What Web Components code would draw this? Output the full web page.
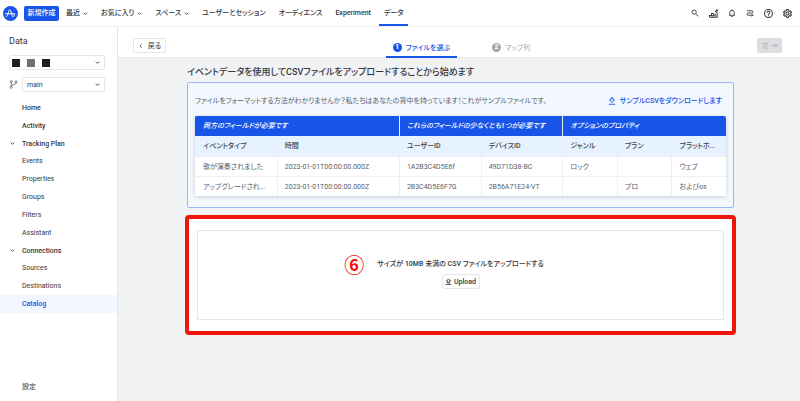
<!DOCTYPE html>
<html lang="ja">
<head>
<meta charset="utf-8">
<title>Data - Catalog</title>
<style>
html, body { margin: 0; }
body {
  --blue: #1754e8; --ink: #35373d; --muted: #5b5e66; --line: #e6e7ea;
  font-family: Roboto, "Noto Sans CJK JP", sans-serif;
  font-size: 7px; line-height: 10px; color: var(--ink); background: #f0f2f4;
  font-feature-settings: "palt";
}
</style>
</head>
<body>
<app-shell>
  <top-bar slot="top">
    <nav-link>最近</nav-link>
    <nav-link>お気に入り</nav-link>
    <nav-link>スペース</nav-link>
    <nav-link plain>ユーザーとセッション</nav-link>
    <nav-link plain>オーディエンス</nav-link>
    <nav-link plain>Experiment</nav-link>
    <nav-link plain current>データ</nav-link>
  </top-bar>
  <side-bar slot="side">
    <side-link kind="head">Home</side-link>
    <side-link kind="head">Activity</side-link>
    <side-link kind="group">Tracking Plan</side-link>
    <side-link>Events</side-link>
    <side-link>Properties</side-link>
    <side-link>Groups</side-link>
    <side-link>Filters</side-link>
    <side-link>Assistant</side-link>
    <side-link kind="group">Connections</side-link>
    <side-link>Sources</side-link>
    <side-link>Destinations</side-link>
    <side-link current>Catalog</side-link>
  </side-bar>
  <step-bar>
    <step-tab num="1" current>ファイルを選ぶ</step-tab>
    <step-tab num="2">マップ列</step-tab>
  </step-bar>
  <page-content>
    <span slot="title">イベントデータを使用してCSVファイルをアップロードすることから始めます</span>
    <sample-panel></sample-panel>
    <upload-box></upload-box>
  </page-content>
</app-shell>

<script>
const ICONS = {
  down: '<path d="M4 6l4 4 4-4"/>',
  left: '<path d="M10 3L5 8l5 5"/>',
  right: '<path d="M2 8h12M9 3l5 5-5 5"/>',
  search: '<circle cx="6.3" cy="6.3" r="4.3"/><path d="M9.7 9.7l5 5"/>',
  chart: '<path d="M1 14.500h13.500V6.500M1 14.500v-3h3.500V8H8M4 12h7V8.500M8 8v2.500M14.500 6.500L11 4M12 1l2.500 2.500L15.500 1"/>',
  bell: '<path d="M2 12.500h12M3.500 12.500V7a4.500 4.500 0 0 1 9 0v5.500M8 2.500V1M6.500 15h3"/>',
  route: '<path d="M2 3.500h9.500a2.250 2.250 0 0 1 0 4.500H4.500a2.250 2.250 0 0 0 0 4.500H14M11.500 10l2.500 2.500-2.500 2.500"/>',
  help: '<circle cx="8" cy="8" r="7"/><path d="M5.700 6.300a2.300 2.300 0 1 1 3.400 2C8.300 8.700 8 9 8 10M8 11.200v1.500"/>',
  gear: '<path d="M6.600 1h2.800l.5 2.100 1.500.9 2.100-.6 1.400 2.400L13.300 7.200v1.600l1.600 1.400-1.400 2.400-2.100-.6-1.500.9-.5 2.100H6.600l-.5-2.100-1.500-.9-2.100.6-1.400-2.400 1.600-1.400V7.200L1.100 5.800l1.400-2.400 2.100.6 1.500-.9z"/><circle cx="8" cy="8" r="2.600"/>',
  branch: '<circle cx="4" cy="3" r="1.800"/><circle cx="4" cy="13" r="1.800"/><circle cx="12.500" cy="3.500" r="1.800"/><path d="M4 5v6M12.500 5.500c0 4-8.500 2-8.500 5.500"/>',
  download: '<path d="M1.500 14.500h13M6 1.500h4V6h3L8 11 3 6h3z"/>',
  upload: '<path d="M1.500 14.500h13M6 11.500h4V7h3L8 2 3 7h3z"/>'
};
const icon = (name, size = 8, weight = 1.8) =>
  `<svg width="${size}" height="${size}" viewBox="0 0 16 16" fill="none" stroke="currentColor" stroke-width="${weight}" aria-hidden="true">${ICONS[name]}</svg>`;

const BASE = `
  *, *::before, *::after { box-sizing: border-box; }
  :host { display: block; box-sizing: border-box; }
  a { color: inherit; text-decoration: none; }
  button, select { font: inherit; font-feature-settings: inherit; color: inherit; margin: 0; padding: 0; border: 0; background: none; }
  button { display: flex; align-items: center; justify-content: center; cursor: pointer; }
  svg { display: block; flex: none; }
`;
const define = (name, render) => customElements.define(name, class extends HTMLElement {
  constructor() {
    super();
    const { css, html } = render(this);
    this.attachShadow({ mode: 'open' }).innerHTML = `<style>${BASE}${css}</style>${html}`;
  }
});

define('app-shell', () => ({
  css: `
    :host { display: flex; flex-direction: column; min-height: 100vh; }
    .body { flex: 1; display: grid; grid-template-columns: 118px minmax(0, 1fr); }`,
  html: `<slot name="top"></slot><div class="body"><slot name="side"></slot><main><slot></slot></main></div>`
}));

define('top-bar', () => ({
  css: `
    :host { background: #fff; border-bottom: 1px solid #eceef0; }
    header { display: flex; align-items: stretch; height: 26px; padding: 0 8px 0 3px; }
    .logo { align-self: center; margin-right: 6px; }
    .new { align-self: center; width: 35px; height: 15px; margin-right: 7px; border-radius: 2px; background: var(--blue); color: #fff; font-weight: 500; }
    nav { display: flex; gap: 12px; flex: 1; }
    .tools { display: flex; align-items: center; gap: 10px; }`,
  html: `<header>
    <a class="logo" href="#" aria-label="Amplitude"><svg width="15" height="15" viewBox="0 0 30 30"><circle cx="15" cy="15" r="15" fill="#1754e8"/><path d="M5 15.500h17.500M7 21.500c3.500-2 4-14 6.500-14s3.500 8 5 13c1.500 3 4.500-1 4.500-5" fill="none" stroke="#fff" stroke-width="2" stroke-linecap="round"/></svg></a>
    <button class="new">新規作成</button>
    <nav><slot></slot></nav>
    <div class="tools">
      <button aria-label="検索">${icon('search')}</button>
      <button aria-label="グラフ">${icon('chart', 9)}</button>
      <button aria-label="通知">${icon('bell')}</button>
      <button aria-label="ルート">${icon('route')}</button>
      <button aria-label="ヘルプ">${icon('help', 9)}</button>
      <button aria-label="管理">${icon('gear', 9)}</button>
    </div></header>`
}));

define('nav-link', el => ({
  css: `
    :host { display: flex; font-weight: 500; }
    :host([plain]) { padding-right: 1px; }
    a { display: flex; align-items: center; gap: 2px; white-space: nowrap; }
    :host([current]) a { padding: 0 5px; margin-left: -5px; border-bottom: 2px solid var(--blue); border-top: 2px solid transparent; }`,
  html: `<a href="#"><slot></slot>${el.hasAttribute('plain') ? '' : icon('down', 7, 2)}</a>`
}));

define('side-bar', () => ({
  css: `
    :host { display: flex; flex-direction: column; background: #fff; border-right: 1px solid var(--line); }
    h2 { margin: 9px; font-size: 9px; line-height: 10px; font-weight: 400; }
    .pick { position: relative; flex: 1; display: flex; align-items: center; }
    .row { display: flex; align-items: center; gap: 4px; margin: 0 12px 7px 9px; color: var(--muted); }
    select { appearance: none; width: 100%; height: 15px; padding: 0 4px; border: 1px solid var(--line); border-radius: 2px; background: #fff; color: var(--ink); }
    .pick > svg { position: absolute; right: 4px; color: var(--ink); pointer-events: none; }
    .blocks { position: absolute; left: 3px; display: flex; gap: 7px; pointer-events: none; }
    i { width: 8px; height: 8px; background: #1d1e22; }
    i:nth-child(2) { background: #707175; }
    .settings { margin: auto 22px 9px; }`,
  html: `<h2>Data</h2>
    <div class="row"><div class="pick"><select aria-label="プロジェクト"><option label=" "></option></select><span class="blocks"><i></i><i></i><i></i></span>${icon('down', 7, 2)}</div></div>
    <div class="row">${icon('branch', 9, 1.4)}<div class="pick"><select aria-label="ブランチ"><option>main</option></select>${icon('down', 7, 2)}</div></div>
    <nav><slot></slot></nav>
    <a class="settings" href="#">設定</a>`
}));

define('side-link', el => ({
  css: `
    a { display: flex; align-items: center; height: 18px; padding-left: 22px; }
    a svg { margin: 0 6px 0 -13px; }
    :host([kind="group"]) a { height: 17px; }
    :host([kind]) a { font-weight: 500; }
    :host([current]) a { background: #f2f7ff; color: var(--blue); font-weight: 500; }`,
  html: `<a href="#">${el.getAttribute('kind') === 'group' ? icon('down', 7, 2) : ''}<slot></slot></a>`
}));

define('step-bar', () => ({
  css: `
    :host { display: flex; align-items: stretch; height: 31px; padding: 0 18px 0 15px; background: #fff; border-bottom: 1px solid #e9ebed; }
    .side { flex: 1; padding-top: 11px; }
    .side button { height: 15px; border-radius: 2px; }
    .back { width: 33px; gap: 4px; border: 1px solid var(--line); }
    .next { width: 25px; gap: 2px; margin-left: auto; background: #dcdee2; color: #a5a8ae; }
    .tabs { display: flex; gap: 28px; }`,
  html: `<div class="side"><button class="back">${icon('left', 6, 2)}戻る</button></div>
    <div class="tabs" role="tablist"><slot></slot></div>
    <div class="side"><button class="next" disabled>次${icon('right', 7)}</button></div>`
}));

define('step-tab', el => ({
  css: `
    :host { display: flex; margin-bottom: -1px; }
    :host(:last-child) { margin-right: -8px; }
    button { gap: 4px; padding: 12px 7px 0; border-bottom: 2px solid transparent; color: #a3a5aa; white-space: nowrap; }
    b { width: 9px; height: 9px; border-radius: 50%; background: currentColor; }
    b span { display: block; color: #fff; line-height: 9px; text-align: center; }
    :host([current]) button { color: var(--blue); border-color: var(--blue); font-weight: 500; }`,
  html: `<button role="tab"><b><span>${el.getAttribute('num')}</span></b><slot></slot></button>`
}));

define('page-content', () => ({
  css: `
    :host { padding: 8px 66px 0 69px; }
    h1 { margin: 0 0 4px; font-size: 9px; line-height: 12px; font-weight: 500; white-space: nowrap; }`,
  html: `<h1><slot name="title"></slot></h1><slot></slot>`
}));

define('sample-panel', () => ({
  css: `
    :host { padding: 11px 7px; border: 1px solid #9db7f5; border-radius: 2px; background: #f3f8ff; color: var(--muted); }
    .intro { display: flex; justify-content: space-between; align-items: center; margin-bottom: 8px; line-height: 14px; white-space: nowrap; }
    p { margin: 0; }
    .intro a { display: flex; align-items: center; gap: 4px; margin-right: 4px; color: var(--blue); font-weight: 500; }
    .frame { border-radius: 2px; overflow: hidden; box-shadow: 0 1px 4px #0000002e; }
    table { width: 100%; table-layout: fixed; border-collapse: separate; border-spacing: 0; background: #fff; }
    th, td { height: 20px; padding: 0 7px; text-align: left; font-weight: 400; overflow: hidden; text-overflow: ellipsis; white-space: nowrap; border-left: 1px solid #edeff2; }
    tr > :first-child { border-left-color: transparent; }
    td { border-top: 1px solid #edeff2; }
    thead tr:first-child th { background: var(--blue); color: #fff; font-style: italic; font-weight: 500; }
    thead tr:first-child th:first-child { border-left-color: var(--blue); }
    thead tr + tr th { background: #e6f2ff; color: #41444b; font-weight: 500; }`,
  html: `<div class="intro"><p>ファイルをフォーマットする方法がわかりませんか？私たちはあなたの背中を持っています！これがサンプルファイルです。</p>
      <a href="#">${icon('download', 8)}サンプルCSVをダウンロードします</a></div>
    <div class="frame"><table>
      <colgroup><col style="width:15.4%"><col style="width:23%"><col style="width:15.4%"><col style="width:15.4%"><col><col><col></colgroup>
      <thead>
        <tr><th colspan="2">両方のフィールドが必要です</th><th colspan="2">これらのフィールドの少なくとも1つが必要です</th><th colspan="3">オプションのプロパティ</th></tr>
        <tr><th>イベントタイプ</th><th>時間</th><th>ユーザーID</th><th>デバイスID</th><th>ジャンル</th><th>プラン</th><th>プラットホ...</th></tr>
      </thead>
      <tbody>
        <tr><td>歌が演奏されました</td><td>2023-01-01T00:00:00.000Z</td><td>1A2B3C4D5E6f</td><td>49D71D38-BC</td><td>ロック</td><td></td><td>ウェブ</td></tr>
        <tr><td>アップグレードされ...</td><td>2023-01-01T00:00:00.000Z</td><td>2B3C4D5E6F7G</td><td>2B56A71E24-VT</td><td></td><td>プロ</td><td>およびos</td></tr>
      </tbody></table></div>`
}));

define('upload-box', () => ({
  css: `
    :host { margin: 7px -2px 0; padding: 11px 8px; border: 4px solid #ee150c; border-radius: 4px; background: #fff; }
    .drop { display: flex; flex-direction: column; align-items: center; padding: 27px 0 30px; border: 1px solid var(--line); }
    .label { position: relative; line-height: 12px; font-weight: 500; }
    .mark { position: absolute; right: calc(100% + 13px); top: -3px; font: 700 20px/20px "Noto Sans CJK JP", sans-serif; color: #ee150c; }
    button { gap: 2px; width: 38px; height: 15px; margin-top: 4px; border: 1px solid var(--line); border-radius: 2px; font-weight: 500; }`,
  html: `<div class="drop"><div class="label"><span class="mark">⑥</span>サイズが 10MB 未満の CSV ファイルをアップロードする</div>
    <button>${icon('upload', 7, 2)}Upload</button></div>`
}));
</script>
</body>
</html>
